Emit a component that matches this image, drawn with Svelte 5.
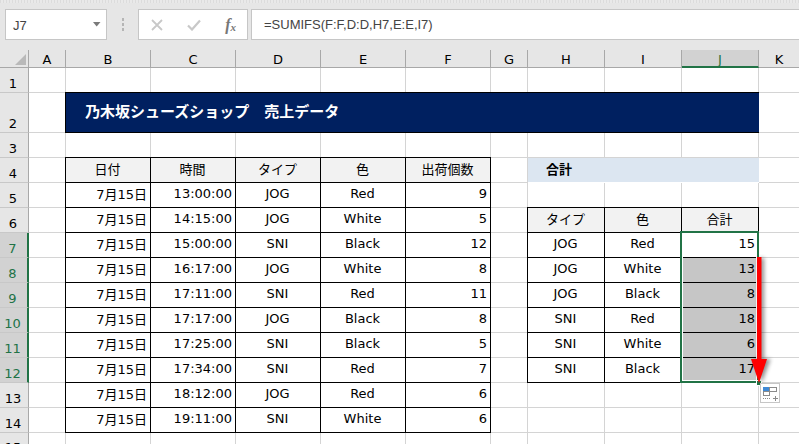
<script>
  const cols = ['A','B','C','D','E','F','G','H','I','J','K'];
  const left = [
    ['日付','時間','タイプ','色','出荷個数'],
    ['7月15日','13:00:00','JOG','Red',9],
    ['7月15日','14:15:00','JOG','White',5],
    ['7月15日','15:00:00','SNI','Black',12],
    ['7月15日','16:17:00','JOG','White',8],
    ['7月15日','17:11:00','SNI','Red',11],
    ['7月15日','17:17:00','JOG','Black',8],
    ['7月15日','17:25:00','SNI','Black',5],
    ['7月15日','17:34:00','SNI','Red',7],
    ['7月15日','18:12:00','JOG','Red',6],
    ['7月15日','19:11:00','SNI','White',6]
  ];
  const right = [
    ['タイプ','色','合計'],
    ['JOG','Red',15],
    ['JOG','White',13],
    ['JOG','Black',8],
    ['SNI','Red',18],
    ['SNI','White',6],
    ['SNI','Black',17]
  ];
  const leftAlign = ['r','r','c','c','r'];
  const rightAlign = ['c','c','r'];

  function cellAt(r, c) {
    if (r >= 4 && r <= 14 && c >= 1 && c <= 5) {
      return { text: left[r-4][c-1], cls: 'tb ' + (r === 4 ? 'hd c' : leftAlign[c-1]) };
    }
    if (r >= 6 && r <= 12 && c >= 7 && c <= 9) {
      const filled = c === 9 && r >= 8;
      return { text: right[r-6][c-7], cls: 'tb ' + (r === 6 ? 'hd c' : rightAlign[c-7]) + (filled ? ' fill' : '') };
    }
    return { text: '', cls: '' };
  }
  const rows = [1,2,3,4,5,6,7,8,9,10,11,12,13,14,15];
  const allCols = cols.map((_, i) => i);
</script>

<div class="app">
  <div class="strip"></div>
  <div class="fbar">
    <div class="namebox">
      <span>J7</span>
      <svg class="drop" width="8" height="5" viewBox="0 0 8 5"><path d="M0 0h7.500L3.700 4.500z" fill="#7a7a7a"/></svg>
    </div>
    <div class="grip"><i></i><i></i><i></i></div>
    <div class="btns">
      <svg width="12" height="12" viewBox="0 0 12 12"><path d="M1 1l10 10M11 1L1 11" stroke="#c8c8c8" stroke-width="1.800" fill="none"/></svg>
      <svg width="14" height="12" viewBox="0 0 14 12"><path d="M1 6.500l4 4L13 1.500" stroke="#c8c8c8" stroke-width="2.200" fill="none"/></svg>
      <span class="fx">f<sub>x</sub></span>
    </div>
    <div class="input"><span>=SUMIFS(F:F,D:D,H7,E:E,I7)</span></div>
  </div>

  <div class="sheet">
    <div class="corner"><svg width="11" height="11" viewBox="0 0 11 11"><path d="M11 0v11H0z" fill="#b9b9b9"/></svg></div>
    {#each cols as c}
      <div class="ch" class:sel={c === 'J'} class:last={c === 'K'}>{c}</div>
    {/each}

    {#each rows as r}
      <div class="rh" class:sel={r >= 7 && r <= 12} class:cut={r === 15}>{r}</div>
      {#if r === 2}
        <div class="cell"></div>
        <div class="title">乃木坂シューズショップ　売上データ</div>
        <div class="cell lastc"></div>
      {:else}
        {#each allCols as c}
          {@const cell = cellAt(r, c)}
          {#if r === 4 && c === 7}
            <div class="total">合計</div>
          {:else if !(r === 4 && (c === 8 || c === 9))}
            <div class="cell {cell.cls}" class:lastc={c === 10}>{cell.text}</div>
          {/if}
        {/each}
      {/if}
    {/each}

    <div class="selbox"></div>
    <div class="handle"></div>
    <svg class="arrow" width="36" height="140" viewBox="0 0 36 140">
      <defs>
        <filter id="soft" x="-50%" y="-20%" width="200%" height="140%"><feGaussianBlur stdDeviation="2.200"/></filter>
      </defs>
      <path d="M16 5h5v101h6.500L18.500 130 10 106h6z" fill="#000" opacity=".45" transform="translate(2 0)" filter="url(#soft)"/>
      <path d="M16 4h4.500v102h5.500L18 130 10 106h6z" fill="#ff0000"/>
    </svg>
    <svg class="opts" width="20" height="20" viewBox="0 0 20 20">
      <rect x=".5" y=".5" width="19" height="19" fill="#fff" stroke="#c6c6c6"/>
      <rect x="3.500" y="4.500" width="6" height="4" fill="#3f8ad6" stroke="#3f8ad6"/>
      <rect x="9.500" y="4.500" width="7" height="4" fill="#fff" stroke="#8a8a8a"/>
      <rect x="3.500" y="8.500" width="6" height="4" fill="#fff" stroke="#8a8a8a"/>
      <path d="M3 15.500h1M5 15.500h1M7 15.500h1M9 15.500h1" stroke="#8a8a8a"/>
      <path d="M13 15.500h5M15.500 13v5" stroke="#8a8a8a"/>
    </svg>
  </div>
</div>

<style>
  :global(body) { margin: 0; background: #fff; }
  .app {
    width: 799px; height: 444px; overflow: hidden; background: #e6e6e6;
    font-family: "DejaVu Sans", "Noto Sans CJK JP", sans-serif; font-size: 13px; color: #000;
    display: flex; flex-direction: column;
  }
  .strip {
    height: 3px; flex: none;
    background: repeating-linear-gradient(90deg, #dcdcdc 0 1px, #e9e9e9 1px 3px);
  }
  .fbar {
    flex: none; height: 31px; margin-top: 6px; margin-bottom: 10px;
    display: flex; align-items: stretch; padding-left: 5px;
  }
  .namebox, .btns, .input { background: #fff; border: 1px solid #c6c6c6; box-sizing: border-box; }
  .namebox {
    width: 102px; display: flex; align-items: center; justify-content: space-between;
    padding: 2px 5px 0 7px; color: #444; font-size: 13px; font-family: "Liberation Sans", sans-serif;
  }
  .drop { margin-top: -3px; }
  .grip { width: 31px; display: flex; flex-direction: column; align-items: center; justify-content: center; gap: 2px; }
  .grip i { display: block; width: 2px; height: 3px; background: #b5b5b5; }
  .btns {
    width: 110px; display: flex; align-items: center; justify-content: space-between;
    padding: 0 11px 0 12px;
  }
  .fx { font-family: "Liberation Serif", serif; font-style: italic; font-weight: bold; color: #777; font-size: 16px; line-height: 1; }
  .fx sub { font-size: 11px; vertical-align: -1px; line-height: 0; }
  .input {
    flex: 1; margin-left: 3px; margin-right: -2px; display: flex; align-items: center;
    padding: 0 12px; color: #444; font-size: 13px; font-family: "Liberation Sans", sans-serif;
    border-right: none;
  }
  .sheet {
    position: relative; flex: none; background: #fff;
    display: grid;
    grid-template-columns: 29px 37px 85px 85px 85px 85px 85px 37px 77px 77px 77px 40px;
    grid-template-rows: 18px 25px 40px repeat(12, 25px) 12px;
  }
  .corner {
    background: #e6e6e6; border-right: 1px solid #a8a8a8; border-bottom: 1px solid #a8a8a8;
    box-sizing: border-box; display: flex; align-items: flex-end; justify-content: flex-end; padding: 0 2px 2px 0;
  }
  .ch {
    background: #e6e6e6; border-right: 1px solid #a8a8a8; border-bottom: 1px solid #a8a8a8;
    box-sizing: border-box; text-align: center; line-height: 17px; padding-top: 1px;
  }
  .ch.last { border-right: none; }
  .ch.sel {
    background: #d2d2d2; color: #217346; border-bottom: 2px solid #217346;
  }
  .rh {
    background: #e6e6e6; border-right: 1px solid #a8a8a8; border-bottom: 1px solid #c8c8c8;
    box-sizing: border-box; display: flex; align-items: flex-end; justify-content: center;
    padding-right: 2px; line-height: 17px; overflow: hidden;
  }
  .rh.sel { background: #d2d2d2; color: #217346; border-right: 2px solid #217346; }
  .rh.cut { align-items: flex-start; padding-top: 6px; border-bottom: none; }
  .cell {
    box-sizing: border-box; border-right: 1px solid #d4d4d4; border-bottom: 1px solid #d4d4d4;
    display: flex; align-items: center; padding: 0 3px 4px; white-space: nowrap; min-width: 0;
  }
  .cell.lastc { border-right: none; }
  .cell.tb {
    position: relative; border: 1px solid #000; margin: -1px 0 0 -1px; background: #fff;
    padding: 0 3px 4px 2px;
  }
  .cell.hd { background: #f2f2f2; }
  .cell.fill { background: #c6c6c6; }
  .cell.r { justify-content: flex-end; }
  .cell.c { justify-content: center; }
  .total {
    grid-column: span 3; background: #dce6f1; font-weight: bold; display: flex; align-items: center;
    padding: 0 0 4px 18px; box-sizing: border-box; margin-bottom: 1px;
  }
  .title {
    grid-column: span 9;
    background: #002060; color: #fff; font-weight: bold; font-size: 15px;
    box-sizing: border-box; margin: -1px 0 0 -1px; border: 1px solid #000; border-right: none;
    display: flex; align-items: center; padding: 0 0 4px 19px;
  }
  .selbox {
    position: absolute; left: 680px; top: 181px; width: 79px; height: 152px;
    box-sizing: border-box; border: 2px solid #217346; pointer-events: none;
    box-shadow: inset 0 0 0 1px #fff;
  }
  .handle {
    position: absolute; left: 756px; top: 330px; width: 4px; height: 4px; background: #217346; border: 1px solid #fff;
  }
  .arrow { position: absolute; left: 741px; top: 203px; }
  .opts { position: absolute; left: 760px; top: 333px; }
</style>
